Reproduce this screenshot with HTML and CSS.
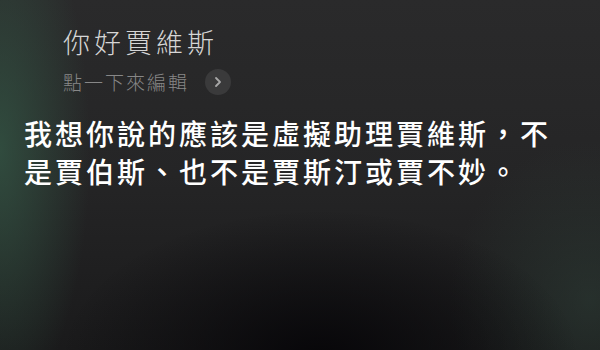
FILE: index.html
```html
<!DOCTYPE html>
<html lang="zh-Hant">
<head>
    <meta charset="UTF-8">
    <meta name="viewport" content="width=device-width, initial-scale=1.0">
    <title>Siri</title>
    <link rel="stylesheet" href="styles.css">
</head>
<body>
    <div class="screen">
        <div class="query">
            <div class="query-text">你好賈維斯</div>
            <div class="edit-row">
                <span class="edit-hint">點一下來編輯</span>
                <span class="edit-button">
                    <svg width="10" height="12" viewBox="0 0 10 12">
                        <path d="M3 2 L7 6 L3 10" fill="none" stroke="#a8a8a8" stroke-width="1.8" stroke-linecap="round" stroke-linejoin="round"/>
                    </svg>
                </span>
            </div>
        </div>
        <div class="answer">我想你說的應該是虛擬助理賈維斯，不是賈伯斯、也不是賈斯汀或賈不妙。</div>
    </div>
</body>
</html>
```

FILE: styles.css
```css
body {
    margin: 0;
    background-color: #1c1c1d;
    font-family: "Noto Sans CJK TC", "Noto Sans", sans-serif;
}
.screen {
    width: 600px;
    height: 350px;
    overflow: hidden;
    background-color: #262627;
    background-image:
        radial-gradient(ellipse 90px 260px at 0px 150px, rgba(52, 88, 70, 0.75), rgba(52, 88, 70, 0) 100%),
        radial-gradient(ellipse 260px 150px at 320px 360px, rgba(6, 5, 8, 0.95), rgba(6, 5, 8, 0) 100%),
        radial-gradient(ellipse 140px 160px at 590px 300px, rgba(48, 66, 58, 0.5), rgba(48, 66, 58, 0) 100%),
        linear-gradient(180deg, #2a2a2b 0%, #252526 50%, #1a1a1b 100%);
}
.query {
    padding: 26px 0 0 63px;
}
.query-text {
    font-size: 27px;
    line-height: 32px;
    font-weight: 300;
    letter-spacing: 4px;
    color: #d6d6d6;
}
.edit-row {
    display: flex;
    align-items: center;
    margin-top: 11px;
}
.edit-hint {
    font-size: 19px;
    line-height: 26px;
    font-weight: 300;
    letter-spacing: 2px;
    color: #878787;
}
.edit-button {
    display: flex;
    align-items: center;
    justify-content: center;
    width: 26px;
    height: 26px;
    margin-left: 16px;
    border-radius: 50%;
    background-color: #3a3a3b;
}
.answer {
    padding: 19px 30px 0 24px;
    font-size: 28px;
    line-height: 38px;
    font-weight: 500;
    letter-spacing: 3px;
    color: #ffffff;
}
```
